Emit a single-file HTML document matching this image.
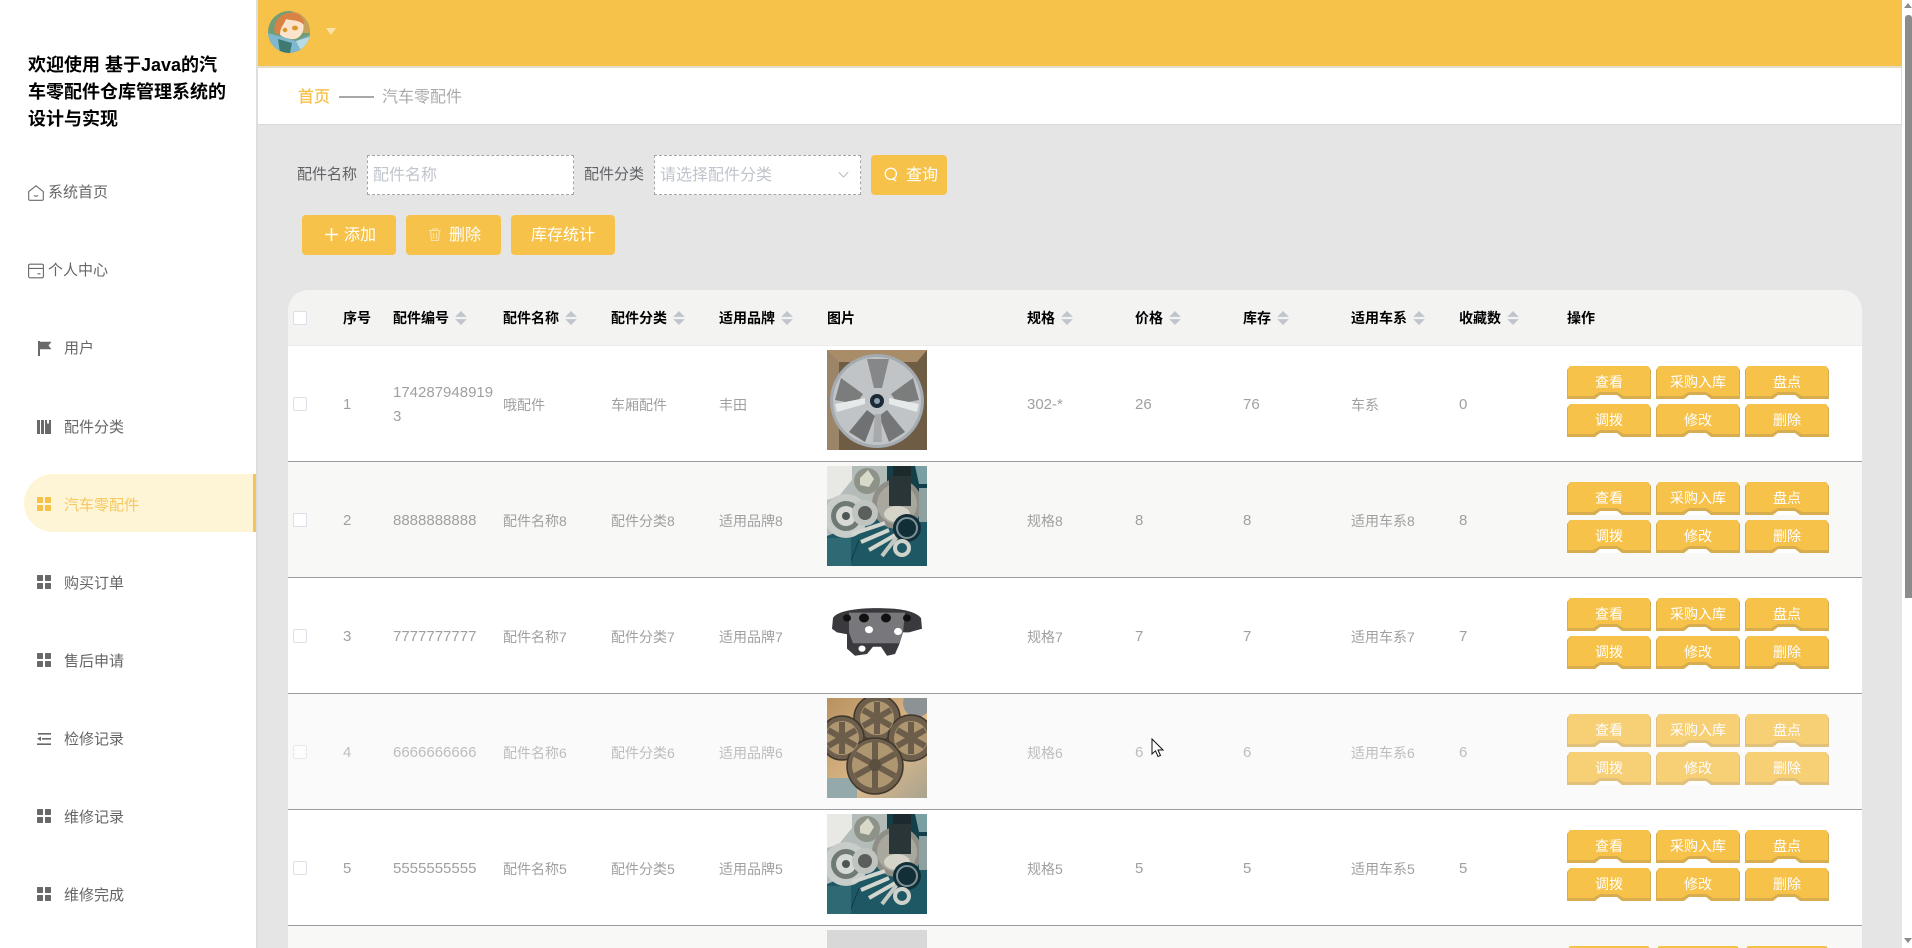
<!DOCTYPE html>
<html lang="zh">
<head>
<meta charset="utf-8">
<title>汽车零配件</title>
<style>
*{box-sizing:border-box;margin:0;padding:0}
html,body{width:1912px;height:948px;overflow:hidden;background:#e5e5e5;font-family:"Liberation Sans","Noto Sans CJK SC",sans-serif}
#wrap{position:absolute;left:0;top:0;width:1912px;height:948px;overflow:hidden;background:#e5e5e5}
.a{position:absolute}
#side{left:0;top:0;width:256px;height:948px;background:#fff}
#sidebd{left:256px;top:0;width:2px;height:948px;background:#dedede}
#title{left:28px;top:52px;width:204px;font-size:18px;line-height:27px;font-weight:700;color:#000}
.m{position:absolute;font-size:15px;line-height:20px;color:#666;white-space:nowrap}
.ic{position:absolute}
#pill{left:24px;top:474px;width:232px;height:58px;background:#fef5d6;border-radius:29px 0 0 29px;border-right:3px solid #f4c45a}
#head{left:258px;top:0;width:1644px;height:66px;background:#f7c24a}
#headsh{left:258px;top:66px;width:1644px;height:2px;background:#e3dccb}
#crumb{left:258px;top:68px;width:1644px;height:57px;background:#fff;border-bottom:1px solid #d8d8d8;border-right:1px solid #ddd}
.t{position:absolute;white-space:nowrap}
.inp{position:absolute;top:155px;height:40px;width:207px;background:#fff;border:1px dashed #a5a5a5}
.ph{position:absolute;font-size:16px;line-height:22px;color:#c0c4cc;white-space:nowrap}
.lb{position:absolute;top:165px;font-size:15px;line-height:20px;color:#606266;white-space:nowrap}
.b{position:absolute;background:#f7c24a;border-radius:4px;color:#fff;font-size:16px;line-height:22px;height:40px}
.b span{position:absolute;top:10px;white-space:nowrap}
#tbl{left:288px;top:290px;width:1574px;height:56px;background:#f3f3f2;border-radius:20px 20px 0 0;border-bottom:1px solid #ececec}
.h{position:absolute;top:18px;font-size:14px;line-height:20px;font-weight:700;color:#000;white-space:nowrap}
.s{position:absolute;top:21px;width:12px;height:14px;margin-left:-1px}
.cb{position:absolute;width:14px;height:14px;background:#fff;border:1px solid #dcdfe6;border-radius:2px}
.r{position:absolute;left:288px;width:1574px;height:116px;background:#fff;border-bottom:1px solid #9c9c9c;color:#a0a0a0;font-size:14px}
.r.e{background:#f8f8f7}
.r.hv{background:#fafafa;color:#bdbdbd}
.r.hv .o{opacity:.75}
.r.hv .cb{opacity:.6}
.c{position:absolute;top:49px;line-height:20px;white-space:nowrap}
.n{font-size:15px}
.im{position:absolute;left:539px;top:4px;width:100px;height:100px;display:block}
.o{position:absolute;width:84px;height:33px;color:#fff;font-size:14px;line-height:20px;text-align:center}
.o svg{position:absolute;left:0;top:0;width:84px;height:33px}
.o span{position:relative;display:block;padding-top:6px}
</style>
</head>
<body>
<svg width="0" height="0" style="position:absolute">
<symbol id="btn" viewBox="0 0 84 33">
<path d="M3 0H81L84 4V33H0V4Z" fill="#d8ad50"/>
<path d="M3 0H81L83 4V30H57L50 26H33L26 30H1V4Z" fill="#f7c24a"/>
<path d="M28 33L33 29H50L55 33Z" fill="#fff"/>
</symbol>
<symbol id="grid" viewBox="0 0 14 14">
<rect x="0" y="0" width="6" height="6" rx=".6"/><rect x="8" y="0" width="6" height="6" rx=".6"/><rect x="0" y="8" width="6" height="6" rx=".6"/><rect x="8" y="8" width="6" height="6" rx=".6"/>
</symbol>
<symbol id="sort" viewBox="0 0 10 12">
<path d="M5 0L10 5H0Z" fill="#c0c4cc"/><path d="M5 12L10 7H0Z" fill="#c0c4cc"/>
</symbol>
<symbol id="parts" viewBox="0 0 100 100">
<rect width="100" height="100" fill="#1e5864"/>
<path d="M0 0H62V28L40 40L20 62L0 70Z" fill="#b4bcb9"/>
<path d="M0 0H25V14L12 30L0 34Z" fill="#e8e9e4"/>
<rect x="60" y="0" width="40" height="26" fill="#123f48"/>
<rect x="66" y="0" width="18" height="26" fill="#1c2a2e"/>
<path d="M88 0H100V18H92Z" fill="#7ba0a4"/>
<circle cx="40" cy="15" r="13" fill="#8e938a"/>
<path d="M33 12l8-8 6 9-5 8-9-2Z" fill="#d9d9c9"/>
<circle cx="70" cy="38" r="25" fill="#8f8f88"/>
<circle cx="70" cy="38" r="20" fill="#a9a89f"/>
<rect x="62" y="10" width="22" height="30" fill="#2a3537"/>
<ellipse cx="70" cy="48" rx="13" ry="8" fill="#d6d4c8"/>
<circle cx="72" cy="58" r="5" fill="#e6e6de"/>
<rect x="92" y="22" width="8" height="34" fill="#8fa0a0"/>
<circle cx="19" cy="50" r="22" fill="#c8cdc9"/>
<circle cx="19" cy="50" r="15" fill="#6f7a76"/>
<circle cx="19" cy="50" r="10" fill="#d6d9d4"/>
<circle cx="19" cy="50" r="4" fill="#4d5655"/>
<circle cx="38" cy="47" r="13" fill="#bfc4c0"/>
<circle cx="38" cy="47" r="7" fill="#5b5f5c"/>
<path d="M25 68L58 57M34 76L62 64M42 84L70 68" stroke="#d3d6cf" stroke-width="4"/>
<path d="M55 90L72 68" stroke="#c4c9c4" stroke-width="4"/>
<circle cx="80" cy="62" r="14" fill="#122f38"/>
<circle cx="80" cy="62" r="10" fill="none" stroke="#7d9197" stroke-width="2"/>
<circle cx="75" cy="82" r="7" fill="none" stroke="#cfd3c9" stroke-width="4"/>
<path d="M22 100L32 74" stroke="#0f3d48" stroke-width="1"/>
<rect x="0" y="72" width="24" height="28" fill="#2f6a74"/>
</symbol>
</svg>

<div id="wrap">
<div id="side" class="a"></div>
<div id="sidebd" class="a"></div>
<div id="title" class="a">欢迎使用 基于Java的汽车零配件仓库管理系统的设计与实现</div>

<svg class="ic" style="left:28px;top:185px" width="16" height="16" viewBox="0 0 16 16" fill="none" stroke="#67696b" stroke-width="1.1"><path d="M.7 6.6L8 .8l7.3 5.800V14a1.3 1.3 0 0 1-1.3 1.3H2A1.3 1.3 0 0 1 .7 14Z"/><path d="M6 10.500c1 .9 3 .9 4 0"/></svg>
<div class="m" style="left:48px;top:183px">系统首页</div>
<svg class="ic" style="left:28px;top:263px" width="16" height="16" viewBox="0 0 16 16" fill="none" stroke="#67696b" stroke-width="1.1"><rect x=".6" y="1.2" width="14.8" height="13.6" rx="1.4"/><path d="M.6 5.4h14.8M9.5 10.8h3"/></svg>
<div class="m" style="left:48px;top:261px">个人中心</div>

<svg class="ic" style="left:37px;top:341px" width="15" height="15" viewBox="0 0 15 15" fill="#67696b"><path d="M1 0h2v15H1zM3 .8h11.500L11.500 4.500l3 3.700H3z"/></svg>
<div class="m" style="left:64px;top:339px">用户</div>
<svg class="ic" style="left:37px;top:420px" width="14" height="14" viewBox="0 0 14 14" fill="#67696b"><path d="M0 0h3v14H0zM4 0h3v14H4zM8 0h2v3l1 1 1-1V0h2v14H8z"/></svg>
<div class="m" style="left:64px;top:418px">配件分类</div>

<div id="pill" class="a"></div>
<svg class="ic" style="left:37px;top:497px" width="14" height="14" fill="#f7c24a"><use href="#grid"/></svg>
<div class="m" style="left:64px;top:496px;color:#f7c860">汽车零配件</div>

<svg class="ic" style="left:37px;top:575px" width="14" height="14" fill="#67696b"><use href="#grid"/></svg>
<div class="m" style="left:64px;top:574px">购买订单</div>
<svg class="ic" style="left:37px;top:653px" width="14" height="14" fill="#67696b"><use href="#grid"/></svg>
<div class="m" style="left:64px;top:652px">售后申请</div>
<svg class="ic" style="left:37px;top:732px" width="14" height="14" viewBox="0 0 14 14" fill="#67696b"><path d="M1 1h13v1.6H1zM5 6h9v1.6H5zM0 11.4h14V13H0zM4 4.5V9L0 6.8z"/></svg>
<div class="m" style="left:64px;top:730px">检修记录</div>
<svg class="ic" style="left:37px;top:809px" width="14" height="14" fill="#67696b"><use href="#grid"/></svg>
<div class="m" style="left:64px;top:808px">维修记录</div>
<svg class="ic" style="left:37px;top:887px" width="14" height="14" fill="#67696b"><use href="#grid"/></svg>
<div class="m" style="left:64px;top:886px">维修完成</div>

<div id="head" class="a"></div>
<div id="headsh" class="a"></div>
<svg class="a" style="left:268px;top:11px" width="42" height="42" viewBox="0 0 42 42">
<defs><clipPath id="av"><circle cx="21" cy="21" r="21"/></clipPath></defs>
<g clip-path="url(#av)">
<rect width="42" height="42" fill="#6f9e78"/>
<rect x="24" y="0" width="18" height="22" fill="#c9a25a"/>
<path d="M0 22L14 26L28 30L42 24V42H0Z" fill="#7fb7cf"/>
<path d="M10 28L24 32L22 42H12Z" fill="#3e7a72"/>
<path d="M28 30L42 26V36L32 38Z" fill="#b8dbe6"/>
<path d="M9 18C9 6 18 2 26 3C34 5 37 12 35 20C33 26 28 29 23 28C15 27 10 24 9 18Z" fill="#fbe4cb"/>
<path d="M7 22C4 10 14 0 26 2C33 3 37 9 36 14C30 8 24 10 18 8C16 14 12 16 12 24Z" fill="#d98244"/>
<ellipse cx="27" cy="17" rx="3" ry="2.4" fill="#d99a2b"/>
<ellipse cx="17" cy="19" rx="2.4" ry="2.2" fill="#d99a2b"/>
</g>
</svg>
<svg class="a" style="left:326px;top:28px" width="10" height="8" viewBox="0 0 10 8"><path d="M0 0H10L5 7Z" fill="#fbe3a8"/></svg>

<div id="crumb" class="a"></div>
<div class="t" style="left:298px;top:87px;font-size:16px;line-height:22px;color:#f7c24a;-webkit-text-stroke:.3px #f7c24a">首页</div>
<div class="a" style="left:339px;top:96px;width:35px;height:2px;background:#a8a8a8"></div>
<div class="t" style="left:382px;top:87px;font-size:16px;line-height:22px;color:#aaa">汽车零配件</div>

<div class="lb" style="left:297px">配件名称</div>
<div class="inp" style="left:367px"></div>
<div class="ph" style="left:373px;top:165px">配件名称</div>
<div class="lb" style="left:584px">配件分类</div>
<div class="inp" style="left:654px"></div>
<div class="ph" style="left:660px;top:165px">请选择配件分类</div>
<svg class="a" style="left:838px;top:171px" width="11" height="8" viewBox="0 0 11 8" fill="none" stroke="#c0c4cc" stroke-width="1.2"><path d="M.8 1.2L5.500 6l4.700-4.800"/></svg>
<div class="b" style="left:871px;top:155px;width:76px">
<svg class="a" style="left:13px;top:12px" width="14" height="15" viewBox="0 0 14 15" fill="none" stroke="#fff" stroke-width="1.3"><circle cx="6.8" cy="6.8" r="5.6"/><path d="M9 12l3 2"/></svg>
<span style="left:35px">查询</span></div>

<div class="b" style="left:302px;top:215px;width:94px">
<svg class="a" style="left:23px;top:13px" width="13" height="13" viewBox="0 0 13 13" fill="none" stroke="#fff" stroke-width="1.5"><path d="M6.500 0v13M0 6.500h13"/></svg>
<span style="left:42px">添加</span></div>
<div class="b" style="left:406px;top:215px;width:95px">
<svg class="a" style="left:23px;top:13px" width="12" height="13" viewBox="0 0 12 13" fill="none" stroke="#fbe3a8" stroke-width="1.1"><path d="M0 2.500h12M4 2.500V1h4v1.500M1.500 2.500l1 10h7l1-10M4.500 5v6M7.500 5v6"/></svg>
<span style="left:43px">删除</span></div>
<div class="b" style="left:511px;top:215px;width:104px"><span style="left:20px">库存统计</span></div>

<div id="tbl" class="a">
<div class="cb" style="left:5px;top:21px"></div>
<div class="h" style="left:55px">序号</div>
<div class="h" style="left:105px">配件编号</div><svg class="s" style="left:168px"><use href="#sort"/></svg>
<div class="h" style="left:215px">配件名称</div><svg class="s" style="left:278px"><use href="#sort"/></svg>
<div class="h" style="left:323px">配件分类</div><svg class="s" style="left:386px"><use href="#sort"/></svg>
<div class="h" style="left:431px">适用品牌</div><svg class="s" style="left:494px"><use href="#sort"/></svg>
<div class="h" style="left:539px">图片</div>
<div class="h" style="left:739px">规格</div><svg class="s" style="left:774px"><use href="#sort"/></svg>
<div class="h" style="left:847px">价格</div><svg class="s" style="left:882px"><use href="#sort"/></svg>
<div class="h" style="left:955px">库存</div><svg class="s" style="left:990px"><use href="#sort"/></svg>
<div class="h" style="left:1063px">适用车系</div><svg class="s" style="left:1126px"><use href="#sort"/></svg>
<div class="h" style="left:1171px">收藏数</div><svg class="s" style="left:1220px"><use href="#sort"/></svg>
<div class="h" style="left:1279px">操作</div>
</div>

<!-- row 1 -->
<div class="r" style="top:346px">
<div class="cb" style="left:5px;top:51px"></div>
<div class="c n" style="left:55px">1</div>
<div class="c n" style="left:105px;top:35px;line-height:24px">174287948919<br>3</div>
<div class="c" style="left:215px">哦配件</div>
<div class="c" style="left:323px">车厢配件</div>
<div class="c" style="left:431px">丰田</div>
<svg class="im" viewBox="0 0 100 100">
<rect width="100" height="100" fill="#6f5c45"/>
<path d="M0 0H100L90 12H10Z" fill="#a98c68"/>
<path d="M0 0L12 12V100H0Z" fill="#9c8468"/>
<circle cx="50" cy="51" r="47" fill="#a3aab0"/>
<circle cx="50" cy="51" r="44" fill="#c0c4c6"/>
<path d="M40 9H62L55 38H47Z" fill="#858788"/>
<path d="M14 28L36 44L29 54L8 50Z" fill="#7b7c7c"/>
<path d="M86 28L64 44L71 54L92 50Z" fill="#7b7c7c"/>
<path d="M22 82L40 60L48 66L38 92Z" fill="#707173"/>
<path d="M78 82L60 60L52 66L62 92Z" fill="#757678"/>
<path d="M48 64H54L55 92H46Z" fill="#a8abad"/>
<path d="M8 54L38 48V54L10 62Z" fill="#e6e9ea"/>
<path d="M92 54L62 48V54L90 62Z" fill="#e6e9ea"/>
<circle cx="50" cy="51" r="7" fill="#1b2a35"/>
<circle cx="50" cy="51" r="3" fill="#8da1ad"/>
</svg>
<div class="c n" style="left:739px">302-*</div>
<div class="c n" style="left:847px">26</div>
<div class="c n" style="left:955px">76</div>
<div class="c" style="left:1063px">车系</div>
<div class="c n" style="left:1171px">0</div>
<div class="o" style="left:1279px;top:20px"><svg><use href="#btn"/></svg><span>查看</span></div>
<div class="o" style="left:1368px;top:20px"><svg><use href="#btn"/></svg><span>采购入库</span></div>
<div class="o" style="left:1457px;top:20px"><svg><use href="#btn"/></svg><span>盘点</span></div>
<div class="o" style="left:1279px;top:58px"><svg><use href="#btn"/></svg><span>调拨</span></div>
<div class="o" style="left:1368px;top:58px"><svg><use href="#btn"/></svg><span>修改</span></div>
<div class="o" style="left:1457px;top:58px"><svg><use href="#btn"/></svg><span>删除</span></div>
</div>

<!-- row 2 -->
<div class="r e" style="top:462px">
<div class="cb" style="left:5px;top:51px"></div>
<div class="c n" style="left:55px">2</div>
<div class="c n" style="left:105px">8888888888</div>
<div class="c" style="left:215px">配件名称8</div>
<div class="c" style="left:323px">配件分类8</div>
<div class="c" style="left:431px">适用品牌8</div>
<svg class="im"><use href="#parts"/></svg>
<div class="c" style="left:739px">规格8</div>
<div class="c n" style="left:847px">8</div>
<div class="c n" style="left:955px">8</div>
<div class="c" style="left:1063px">适用车系8</div>
<div class="c n" style="left:1171px">8</div>
<div class="o" style="left:1279px;top:20px"><svg><use href="#btn"/></svg><span>查看</span></div>
<div class="o" style="left:1368px;top:20px"><svg><use href="#btn"/></svg><span>采购入库</span></div>
<div class="o" style="left:1457px;top:20px"><svg><use href="#btn"/></svg><span>盘点</span></div>
<div class="o" style="left:1279px;top:58px"><svg><use href="#btn"/></svg><span>调拨</span></div>
<div class="o" style="left:1368px;top:58px"><svg><use href="#btn"/></svg><span>修改</span></div>
<div class="o" style="left:1457px;top:58px"><svg><use href="#btn"/></svg><span>删除</span></div>
</div>

<!-- row 3 -->
<div class="r" style="top:578px">
<div class="cb" style="left:5px;top:51px"></div>
<div class="c n" style="left:55px">3</div>
<div class="c n" style="left:105px">7777777777</div>
<div class="c" style="left:215px">配件名称7</div>
<div class="c" style="left:323px">配件分类7</div>
<div class="c" style="left:431px">适用品牌7</div>
<svg class="im" viewBox="0 0 100 100">
<g transform="translate(0 18) scale(1 .9)">
<path d="M6 20C10 12 30 9 50 9C72 9 88 12 94 20L95 32L82 36L76 36L72 50L68 60L60 62L54 52L46 52L40 60L28 62L20 54L20 38L10 36L5 32Z" fill="#3a3a3e"/>
<path d="M22 14H78L76 36L72 48H26L22 36Z" fill="#77777c"/>
<circle cx="20" cy="20" r="4" fill="#111"/><circle cx="37" cy="20" r="5" fill="#111"/><circle cx="59" cy="20" r="5" fill="#111"/><circle cx="80" cy="20" r="4" fill="#111"/>
<circle cx="42" cy="33" r="4" fill="#fff"/><circle cx="71" cy="35" r="4" fill="#fff"/><circle cx="35" cy="54" r="3.500" fill="#fff"/>
</g>
</svg>
<div class="c" style="left:739px">规格7</div>
<div class="c n" style="left:847px">7</div>
<div class="c n" style="left:955px">7</div>
<div class="c" style="left:1063px">适用车系7</div>
<div class="c n" style="left:1171px">7</div>
<div class="o" style="left:1279px;top:20px"><svg><use href="#btn"/></svg><span>查看</span></div>
<div class="o" style="left:1368px;top:20px"><svg><use href="#btn"/></svg><span>采购入库</span></div>
<div class="o" style="left:1457px;top:20px"><svg><use href="#btn"/></svg><span>盘点</span></div>
<div class="o" style="left:1279px;top:58px"><svg><use href="#btn"/></svg><span>调拨</span></div>
<div class="o" style="left:1368px;top:58px"><svg><use href="#btn"/></svg><span>修改</span></div>
<div class="o" style="left:1457px;top:58px"><svg><use href="#btn"/></svg><span>删除</span></div>
</div>

<!-- row 4 (hover) -->
<div class="r hv" style="top:694px">
<div class="cb" style="left:5px;top:51px"></div>
<div class="c n" style="left:55px">4</div>
<div class="c n" style="left:105px">6666666666</div>
<div class="c" style="left:215px">配件名称6</div>
<div class="c" style="left:323px">配件分类6</div>
<div class="c" style="left:431px">适用品牌6</div>
<svg class="im" viewBox="0 0 100 100">
<defs><linearGradient id="wd" x1="0" y1="0" x2="1" y2="1"><stop offset="0" stop-color="#b8915f"/><stop offset=".6" stop-color="#dcb98a"/><stop offset="1" stop-color="#a8a38f"/></linearGradient></defs>
<rect width="100" height="100" fill="url(#wd)"/>
<rect x="0" y="80" width="30" height="20" fill="#94a9aa"/>
<circle cx="90" cy="5" r="14" fill="#8d9394"/>
<g fill="#6d5f4b" stroke="#3f372b" stroke-width="1.500">
<circle cx="50" cy="20" r="23"/><circle cx="15" cy="40" r="22"/><circle cx="84" cy="40" r="23"/><circle cx="48" cy="68" r="28"/>
</g>
<g fill="#ad9670">
<circle cx="50" cy="20" r="17"/><circle cx="15" cy="40" r="17"/><circle cx="84" cy="40" r="17"/><circle cx="48" cy="67" r="23"/>
</g>
<g stroke="#6b5d4a" stroke-width="6">
<path d="M50 4V36M36 12L64 28M36 28L64 12"/><path d="M15 24V56M1 32L29 48M1 48L29 32"/><path d="M84 24V56M70 32L98 48M70 48L98 32"/><path d="M48 44V90M28 56L68 78M28 78L68 56"/>
</g>
<circle cx="48" cy="67" r="6" fill="#5b4f3f"/>
</svg>
<div class="c" style="left:739px">规格6</div>
<div class="c n" style="left:847px">6</div>
<div class="c n" style="left:955px">6</div>
<div class="c" style="left:1063px">适用车系6</div>
<div class="c n" style="left:1171px">6</div>
<div class="o" style="left:1279px;top:20px"><svg><use href="#btn"/></svg><span>查看</span></div>
<div class="o" style="left:1368px;top:20px"><svg><use href="#btn"/></svg><span>采购入库</span></div>
<div class="o" style="left:1457px;top:20px"><svg><use href="#btn"/></svg><span>盘点</span></div>
<div class="o" style="left:1279px;top:58px"><svg><use href="#btn"/></svg><span>调拨</span></div>
<div class="o" style="left:1368px;top:58px"><svg><use href="#btn"/></svg><span>修改</span></div>
<div class="o" style="left:1457px;top:58px"><svg><use href="#btn"/></svg><span>删除</span></div>
</div>

<!-- row 5 -->
<div class="r" style="top:810px">
<div class="cb" style="left:5px;top:51px"></div>
<div class="c n" style="left:55px">5</div>
<div class="c n" style="left:105px">5555555555</div>
<div class="c" style="left:215px">配件名称5</div>
<div class="c" style="left:323px">配件分类5</div>
<div class="c" style="left:431px">适用品牌5</div>
<svg class="im"><use href="#parts"/></svg>
<div class="c" style="left:739px">规格5</div>
<div class="c n" style="left:847px">5</div>
<div class="c n" style="left:955px">5</div>
<div class="c" style="left:1063px">适用车系5</div>
<div class="c n" style="left:1171px">5</div>
<div class="o" style="left:1279px;top:20px"><svg><use href="#btn"/></svg><span>查看</span></div>
<div class="o" style="left:1368px;top:20px"><svg><use href="#btn"/></svg><span>采购入库</span></div>
<div class="o" style="left:1457px;top:20px"><svg><use href="#btn"/></svg><span>盘点</span></div>
<div class="o" style="left:1279px;top:58px"><svg><use href="#btn"/></svg><span>调拨</span></div>
<div class="o" style="left:1368px;top:58px"><svg><use href="#btn"/></svg><span>修改</span></div>
<div class="o" style="left:1457px;top:58px"><svg><use href="#btn"/></svg><span>删除</span></div>
</div>

<!-- row 6 (clipped) -->
<div class="r e" style="top:926px;height:22px;border-bottom:0">
<div class="a" style="left:539px;top:4px;width:100px;height:18px;background:#d8d8d8"></div>
<div class="o" style="left:1279px;top:20px;height:2px;overflow:hidden"><svg><use href="#btn"/></svg></div>
<div class="o" style="left:1368px;top:20px;height:2px;overflow:hidden"><svg><use href="#btn"/></svg></div>
<div class="o" style="left:1457px;top:20px;height:2px;overflow:hidden"><svg><use href="#btn"/></svg></div>
</div>

<!-- cursor -->
<svg class="a" style="left:1151px;top:738px" width="13" height="20" viewBox="0 0 13 20"><path d="M1 1V16L4.500 12.800L7 18.500L9.500 17.500L7 12H12Z" fill="#fff" stroke="#111" stroke-width="1"/></svg>

<!-- scrollbar -->
<div class="a" style="left:1902px;top:0;width:10px;height:948px;background:#fff"></div>
<div class="a" style="left:1905px;top:15px;width:7px;height:583px;background:#8c8c8c;border-radius:3px 3px 0 0"></div>
<svg class="a" style="left:1904px;top:3px" width="8" height="5" viewBox="0 0 8 5"><path d="M4 0L8 5H0Z" fill="#8c8c8c"/></svg>
<svg class="a" style="left:1904px;top:938px" width="8" height="5" viewBox="0 0 8 5"><path d="M4 5L8 0H0Z" fill="#8c8c8c"/></svg>
</div>
</body>
</html>
